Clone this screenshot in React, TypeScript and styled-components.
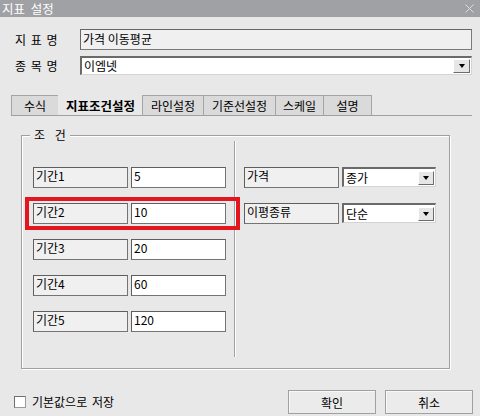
import React from "react";
import styled, { createGlobalStyle } from "styled-components";

const GlobalStyle = createGlobalStyle`
  html, body {
    margin: 0;
    padding: 0;
    background: #e8e8e8;
  }
  body {
    font-family: "Noto Sans CJK KR", "Noto Sans", sans-serif;
    font-size: 12px;
    color: #000;
  }
  * {
    box-sizing: border-box;
  }
`;

const Window = styled.div`
  width: 480px;
  height: 416px;
  background: #e8e8e8;
  overflow: hidden;
  display: flex;
  flex-direction: column;
`;

const TitleBar = styled.div`
  height: 17px;
  flex: none;
  background: #9fa1a5;
  display: flex;
  align-items: center;
  justify-content: space-between;
  padding: 0 6px 0 2px;
`;

const Title = styled.span`
  color: #fff;
  font-size: 12.5px;
  line-height: 17px;
  word-spacing: 3px;
`;

const Body = styled.div`
  flex: 1;
  padding: 12px 8px 0 10px;
  display: flex;
  flex-direction: column;
`;

const FieldRow = styled.div`
  display: flex;
  align-items: center;
  margin-bottom: 6px;
`;

const FieldLabel = styled.span`
  width: 70px;
  padding-left: 5px;
  word-spacing: 2px;
`;

const ReadonlyBox = styled.div`
  flex: 1;
  height: 21px;
  background: #f0f0f0;
  border: 1px solid #7a7a7a;
  border-top-color: #666;
  border-left-color: #666;
  padding: 0 2px;
  line-height: 18px;
`;

const Combo = styled.div<{ $width?: number; $height: number }>`
  ${(p) => (p.$width ? `width: ${p.$width}px;` : "flex: 1;")}
  height: ${(p) => p.$height}px;
  background: #fff;
  display: flex;
  align-items: center;
  border-top: 2px solid #6a6a6a;
  border-left: 2px solid #6a6a6a;
  border-right: 1px solid #d4d4d4;
  border-bottom: 1px solid #d4d4d4;
  padding: 0 1px 0 2px;
`;

const ComboText = styled.span`
  flex: 1;
  line-height: 14px;
`;

const DropButton = styled.span<{ $width: number }>`
  width: ${(p) => p.$width}px;
  height: 14px;
  background: #e6e6e6;
  border: 1px solid;
  border-color: #fff #6c6c6c #6c6c6c #fff;
  display: flex;
  align-items: center;
  justify-content: center;
`;

const Arrow = styled.span`
  width: 0;
  height: 0;
  border-left: 3.5px solid transparent;
  border-right: 3.5px solid transparent;
  border-top: 4px solid #000;
`;

const TabStrip = styled.div`
  margin-top: 14px;
  margin-left: 1px;
  height: 21px;
  display: flex;
  border-bottom: 1px solid #a0a0a0;
`;

const Tab = styled.div<{ $width: number; $active?: boolean }>`
  width: ${(p) => p.$width}px;
  height: 20px;
  margin-right: -1px;
  display: flex;
  align-items: center;
  justify-content: center;
  border: 1px solid ${(p) => (p.$active ? "transparent" : "#a5a5a5")};
  border-bottom: none;
  background: ${(p) => (p.$active ? "#e8e8e8" : "#dadada")};
  font-weight: ${(p) => (p.$active ? 700 : 400)};
  font-size: ${(p) => (p.$active ? "12.5px" : "12px")};
`;

const Group = styled.div`
  position: relative;
  margin: 19px 0 0 11px;
  width: 429px;
  height: 234px;
  border: 1px solid #a0a0a0;
  box-shadow: inset 1px 1px 0 #fff, 1px 1px 0 #fff;
  display: grid;
  grid-template-columns: 212px 1px 1fr;
`;

const Legend = styled.span`
  position: absolute;
  top: -9px;
  left: 8px;
  padding: 0 4px;
  background: #e8e8e8;
  line-height: 16px;
  word-spacing: 7px;
`;

const Column = styled.div<{ $pad: number }>`
  padding: 31px 0 0 ${(p) => p.$pad}px;
  display: flex;
  flex-direction: column;
  gap: 15px;
`;

const Divider = styled.div`
  margin: 5px 0 11px;
  background: #a0a0a0;
  box-shadow: 1px 0 0 #fff;
`;

const Row = styled.div<{ $marked?: boolean }>`
  position: relative;
  display: flex;
  gap: 3px;
  height: 21px;

  ${(p) =>
    p.$marked &&
    `
    &::after {
      content: "";
      position: absolute;
      top: -6px;
      bottom: -6px;
      left: -8px;
      right: -6px;
      border: 4px solid #e3161f;
      pointer-events: none;
    }
  `}
`;

const CellLabel = styled.div`
  width: 95px;
  height: 21px;
  background: #f0f0f0;
  border: 1px solid #747474;
  border-top-color: #5e5e5e;
  border-left-color: #5e5e5e;
  padding: 0 2px;
  line-height: 16px;
`;

const CellInput = styled(CellLabel)`
  background: #fff;
`;

const Footer = styled.div`
  margin-top: 21px;
  height: 24px;
  display: flex;
  align-items: center;
`;

const Checkbox = styled.span`
  width: 12px;
  height: 12px;
  margin: 0 6px 0 4px;
  background: #fff;
  border: 1px solid #9a9a9a;
  border-top-color: #707070;
  border-left-color: #707070;
`;

const CheckText = styled.span`
  line-height: 16px;
  word-spacing: 2px;
`;

const Buttons = styled.div`
  margin-left: auto;
  margin-right: -1px;
  display: flex;
  gap: 9px;
`;

const Button = styled.button`
  width: 88px;
  height: 24px;
  padding: 0;
  font: inherit;
  color: #000;
  background: #ebebeb;
  border: 1px solid #a0a0a0;
  box-shadow: inset 1px 1px 0 #f8f8f8;
`;

const tabs = [
  { label: "수식", width: 48 },
  { label: "지표조건설정", width: 85, active: true },
  { label: "라인설정", width: 62 },
  { label: "기준선설정", width: 73 },
  { label: "스케일", width: 49 },
  { label: "설명", width: 49 },
];

const periods = ["5", "10", "20", "60", "120"];

const CloseIcon = () => (
  <svg width="9" height="9" viewBox="0 0 9 9">
    <path d="M0.5 0.5 L8.5 8.5 M8.5 0.5 L0.5 8.5" stroke="#dcdcdc" strokeWidth="1" />
  </svg>
);

export default function App() {
  return (
    <>
      <GlobalStyle />
      <Window>
        <TitleBar>
          <Title>지표 설정</Title>
          <CloseIcon />
        </TitleBar>
        <Body>
          <FieldRow>
            <FieldLabel>지 표 명</FieldLabel>
            <ReadonlyBox>가격 이동평균</ReadonlyBox>
          </FieldRow>
          <FieldRow>
            <FieldLabel>종 목 명</FieldLabel>
            <Combo $height={19}>
              <ComboText>이엠넷</ComboText>
              <DropButton $width={17}>
                <Arrow />
              </DropButton>
            </Combo>
          </FieldRow>

          <TabStrip>
            {tabs.map((t) => (
              <Tab key={t.label} $width={t.width} $active={t.active}>
                {t.label}
              </Tab>
            ))}
          </TabStrip>

          <Group>
            <Legend>조 건</Legend>
            <Column $pad={11}>
              {periods.map((v, i) => (
                <Row key={i} $marked={i === 1}>
                  <CellLabel>기간{i + 1}</CellLabel>
                  <CellInput>{v}</CellInput>
                </Row>
              ))}
            </Column>
            <Divider />
            <Column $pad={9}>
              <Row>
                <CellLabel>가격</CellLabel>
                <Combo $width={94} $height={20}>
                  <ComboText>종가</ComboText>
                  <DropButton $width={16}>
                    <Arrow />
                  </DropButton>
                </Combo>
              </Row>
              <Row>
                <CellLabel>이평종류</CellLabel>
                <Combo $width={94} $height={20}>
                  <ComboText>단순</ComboText>
                  <DropButton $width={16}>
                    <Arrow />
                  </DropButton>
                </Combo>
              </Row>
            </Column>
          </Group>

          <Footer>
            <Checkbox />
            <CheckText>기본값으로 저장</CheckText>
            <Buttons>
              <Button>확인</Button>
              <Button>취소</Button>
            </Buttons>
          </Footer>
        </Body>
      </Window>
    </>
  );
}
